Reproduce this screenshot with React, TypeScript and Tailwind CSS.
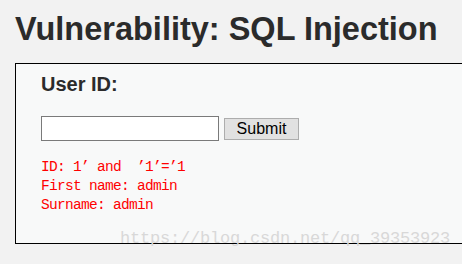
export default function App() {
  return (
    <div className="relative h-[264px] w-[462px] overflow-hidden bg-[#f2f2f2] font-['Liberation_Sans',Arial,sans-serif]">
      <h1 className="pl-[15px] pt-[13px] text-[32.5px] font-bold leading-[32px] text-[#2b2b2b]">
        Vulnerability: SQL Injection
      </h1>
      <div className="ml-[15px] mt-[18px] h-[181px] w-[470px] border border-black bg-[#f8f9f9] pl-[25px] pt-[8px]">
        <h2 className="text-[20px] font-bold leading-[24px] text-[#2b2b2b]">User ID:</h2>
        <div className="mt-[20px] flex items-center gap-[5px]">
          <input
            type="text"
            className="h-[25px] w-[178px] border border-[#7a7a7a] bg-white outline-none"
          />
          <button className="h-[22px] w-[75px] border border-[#adadad] bg-[#e1e1e1] text-[16px] leading-[20px] text-black">
            Submit
          </button>
        </div>
        <pre className="mt-[17px] whitespace-pre font-['Liberation_Mono','Courier_New',monospace] text-[14.5px] leading-[19px] tracking-[-0.7px] text-[#ff0000]">
{`ID: 1’ and  ’1’=’1
First name: admin
Surname: admin`}
        </pre>
      </div>
      <div className="pointer-events-none absolute left-[120px] top-[229px] whitespace-pre font-['Liberation_Mono','Courier_New',monospace] text-[17px] leading-[20px] tracking-[-0.2px] text-[#d8d8d8]">
        https://blog.csdn.net/qq_39353923
      </div>
    </div>
  );
}
